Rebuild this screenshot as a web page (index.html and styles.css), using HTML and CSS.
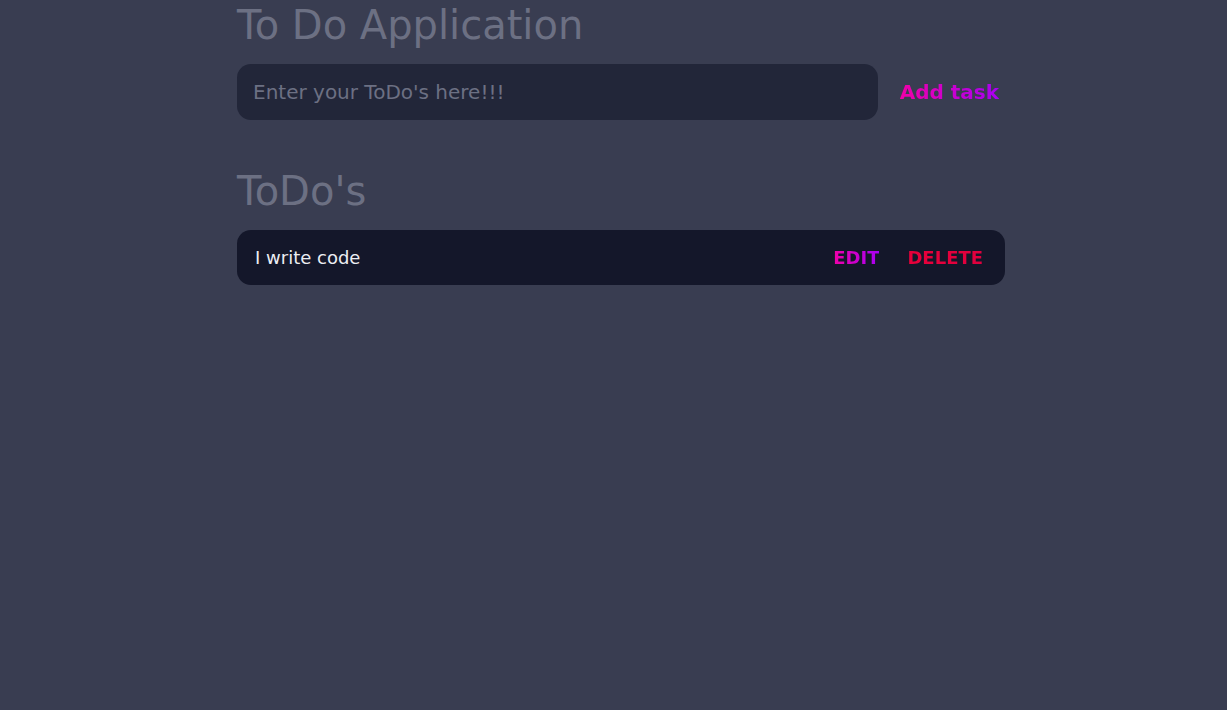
FILE: index.html
```html
<!DOCTYPE html>
<html lang="en">
<head>
<meta charset="utf-8">
<title>To Do Application</title>
<link rel="stylesheet" href="styles.css">
</head>
<body>
<main class="app">
  <h1 class="title">To Do Application</h1>
  <form class="new-task">
    <input class="task-input" type="text" placeholder="Enter your ToDo's here!!!">
    <button class="add-btn" type="button"><span class="grad-text">Add task</span></button>
  </form>
  <h2 class="subtitle">ToDo's</h2>
  <ul class="todo-list">
    <li class="todo-item">
      <span class="todo-text">I write code</span>
      <div class="todo-actions">
        <button class="act-btn" type="button"><span class="grad-text">EDIT</span></button>
        <button class="act-btn" type="button"><span class="del-text">DELETE</span></button>
      </div>
    </li>
  </ul>
</main>
</body>
</html>
```
FILE: styles.css
```css
* { box-sizing: border-box; }
html, body {
  margin: 0;
  height: 100%;
}
body {
  background: #393d51;
  font-family: "DejaVu Sans", sans-serif;
  padding-left: 15px;
}
.app {
  width: 768px;
  margin: 0 auto;
}
.title {
  margin: 0;
  font-size: 40px;
  font-weight: 400;
  color: #6c7083;
  line-height: 50px;
}
.new-task {
  display: flex;
  align-items: center;
  margin-top: 14px;
}
.task-input {
  width: 641px;
  height: 56px;
  border: none;
  outline: none;
  border-radius: 14px;
  background: #222639;
  padding: 0 16px;
  font-family: "DejaVu Sans", sans-serif;
  font-size: 20px;
  color: #d0d3dc;
}
.task-input::placeholder {
  color: #6c7083;
}
.add-btn {
  flex: 1;
  background: none;
  border: none;
  font-family: "DejaVu Sans", sans-serif;
  font-size: 20px;
  font-weight: 700;
  padding: 0 6px 0 0;
  text-align: right;
  cursor: pointer;
}
.grad-text {
  background: linear-gradient(90deg, #f000a8, #a800f4);
  -webkit-background-clip: text;
  background-clip: text;
  color: transparent;
}
.del-text {
  background: linear-gradient(90deg, #e8003a, #e0003e);
  -webkit-background-clip: text;
  background-clip: text;
  color: transparent;
}
.subtitle {
  margin: 47px 0 0;
  font-size: 40px;
  font-weight: 400;
  color: #6c7083;
  line-height: 48px;
}
.todo-list {
  list-style: none;
  margin: 15px 0 0;
  padding: 0;
}
.todo-item {
  display: flex;
  align-items: center;
  justify-content: space-between;
  height: 55px;
  background: #14172a;
  border-radius: 14px;
  padding: 0 22px 0 18px;
}
.todo-text {
  color: #eceef3;
  font-size: 18px;
}
.todo-actions {
  display: flex;
  gap: 28px;
}
.act-btn {
  background: none;
  border: none;
  padding: 0;
  font-family: "DejaVu Sans", sans-serif;
  font-size: 18px;
  font-weight: 700;
  cursor: pointer;
}
```
